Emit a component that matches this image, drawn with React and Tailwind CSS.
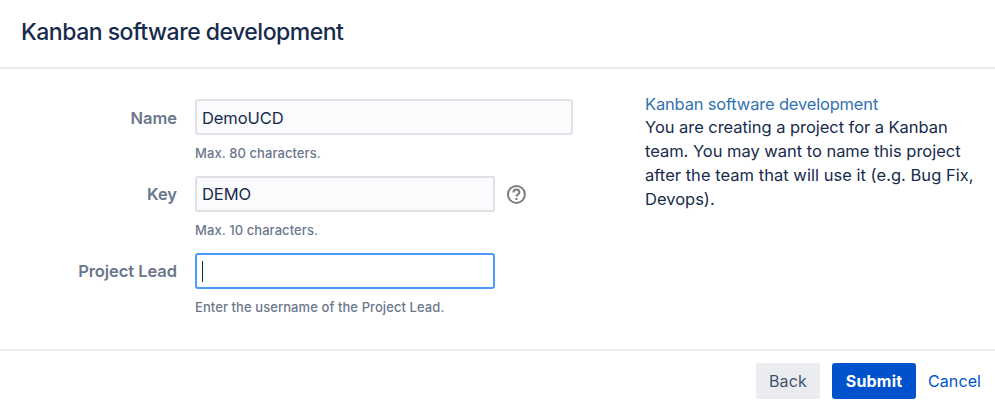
function HelpIcon() {
  return (
    <svg className="ml-[11px] size-5" viewBox="0 0 20 20" fill="none" stroke="#7c7c7c" strokeWidth="2" aria-hidden="true">
      <circle cx="10.4" cy="10.4" r="8.5" />
      <path d="M7.4 8.4C7.4 6.6 8.6 5.5 10.4 5.5s3 1.1 3 2.7c0 2-3 2.3-3 4.4" />
      <path d="M9.4 14h2v2h-2z" fill="#7c7c7c" stroke="none" />
    </svg>
  );
}

function Field({ label, hint, labelClass = 'pt-[6px]', children }) {
  return (
    <div className="flex h-[77px]">
      <div className={`w-[177px] text-right text-[16.5px] leading-6 font-semibold tracking-[-0.06px] text-[#6b778c] ${labelClass}`}>{label}</div>
      <div className="ml-[18px]">
        <div className="flex h-9 items-center">{children}</div>
        <p className="mt-2 text-[13px] leading-5 font-medium tracking-[0.08px] text-[#6b778c]">{hint}</p>
      </div>
    </div>
  );
}

export default function App() {
  return (
    <div className="flex h-[409px] w-[995px] flex-col overflow-hidden bg-white font-['Inter','Liberation_Sans',sans-serif] text-[16.5px] text-[#172b4d]">
      <header className="h-[69px] border-b-2 border-[#ebecf0] pt-[18px] pl-[21px] text-[23px] leading-7 font-medium tracking-[-0.5px]">
        Kanban software development
      </header>
      <main className="flex h-[280px] pt-[30px]">
        <div className="w-[645px]">
          <Field label="Name" hint="Max. 80 characters." labelClass="pt-[7px]">
            <div className="flex h-9 w-[378px] items-center rounded-[3px] border-2 border-[#dfe1e6] bg-[#fafbfc] px-[5px] pt-[2px] leading-6 tracking-[-0.08px]">DemoUCD</div>
          </Field>
          <Field label="Key" hint="Max. 10 characters.">
            <div className="flex h-9 w-[300px] items-center rounded-[3px] border-2 border-[#dfe1e6] bg-[#fafbfc] px-[5px] leading-6 tracking-[-0.08px]">DEMO</div>
            <HelpIcon />
          </Field>
          <Field label="Project Lead" hint="Enter the username of the Project Lead.">
            <div className="flex h-9 w-[300px] items-center rounded-[3px] border-2 border-[#4c9aff] bg-white px-[5px]">
              <span className="h-[21px] w-px bg-[#172b4d]" />
            </div>
          </Field>
        </div>
        <aside className="-mt-[7px] leading-6">
          <h2 className="h-[23px] tracking-[-0.18px] text-[#3572b0]">Kanban software development</h2>
          <p>
            <span className="tracking-[-0.05px]">You are creating a project for a Kanban</span><br />
            <span className="tracking-[-0.03px]">team. You may want to name this project</span><br />
            <span className="tracking-[0.03px]">after the team that will use it (e.g. Bug Fix,</span><br />
            Devops).
          </p>
        </aside>
      </main>
      <footer className="flex h-[60px] items-start border-t-2 border-[#ebecf0] pt-3 text-[16px]">
        <button className="ml-[756px] h-9 w-16 rounded-[3px] bg-[#ebecf0] pb-px tracking-[0.2px] text-[#42526e]">Back</button>
        <button className="ml-3 h-9 w-21 rounded-[3px] bg-[#0052cc] pb-px font-bold tracking-[0.2px] text-white">Submit</button>
        <button className="ml-3 h-9 pb-px tracking-[0.1px] text-[#0052cc]">Cancel</button>
      </footer>
    </div>
  );
}
